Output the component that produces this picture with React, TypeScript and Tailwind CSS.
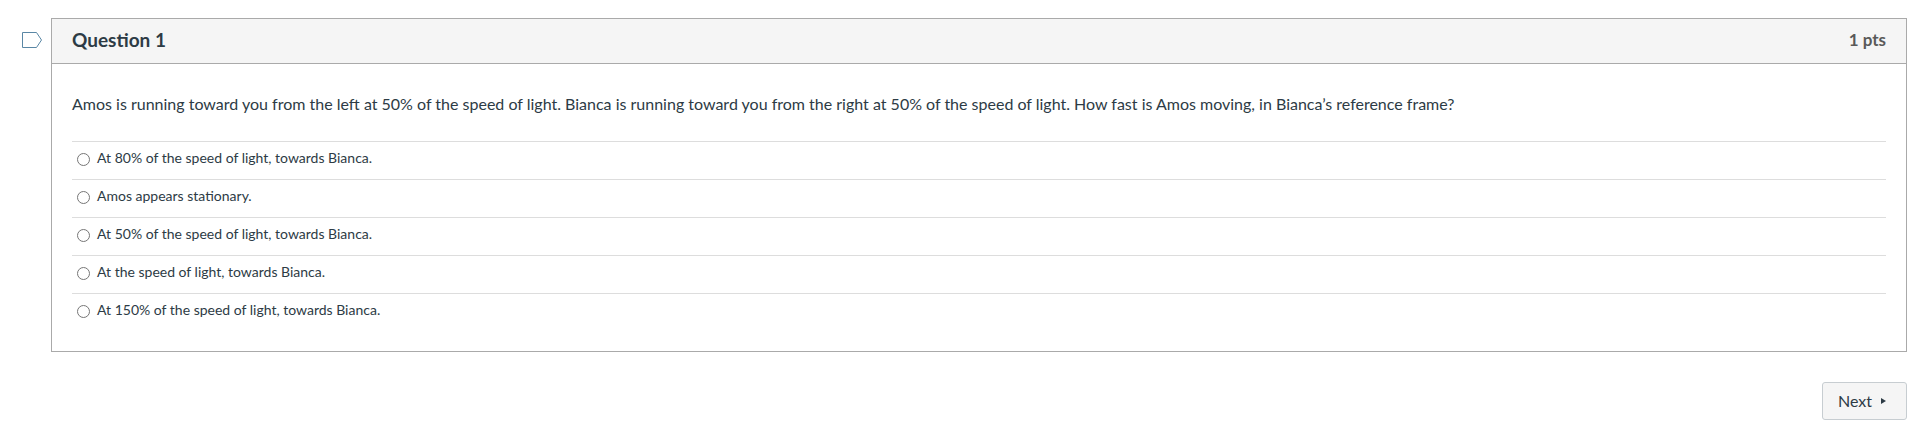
const answers = [
  'At 80% of the speed of light, towards Bianca.',
  'Amos appears stationary.',
  'At 50% of the speed of light, towards Bianca.',
  'At the speed of light, towards Bianca.',
  'At 150% of the speed of light, towards Bianca.',
]

export default function App() {
  return (
    <main className="min-h-screen bg-white px-5 pt-[18px] pb-2 font-['Lato',sans-serif] text-[#2d3b45]">
      <div className="flex items-start gap-[7px]">
        <button type="button" aria-label="Flag question" className="mt-3 h-5 w-6 shrink-0">
          <svg viewBox="0 0 24 20" className="h-5 w-6" fill="none" stroke="#5a87a5">
            <path d="M2.5 2.5h14l5 7.5l-5 7.5h-14z" />
          </svg>
        </button>

        <section className="min-w-0 flex-1 border border-[#aaaaaa]">
          <header className="flex items-center justify-between border-b border-[#aaaaaa] bg-[#f5f5f5] px-5 pt-[7px] pb-[9px] leading-7">
            <h2 className="text-[19px] font-bold">Question 1</h2>
            <span className="text-[17px] font-bold text-[#595959]">1 pts</span>
          </header>

          <form className="px-5 pt-7 pb-5">
            <fieldset>
              <legend className="mb-[25px] text-[16px] leading-6">
                Amos is running toward you from the left at 50% of the speed of light. Bianca is running toward you from
                the right at 50% of the speed of light. How fast is Amos moving, in Bianca’s reference frame?
              </legend>
              {answers.map((answer) => (
                <div key={answer} className="border-t border-[#dddddd] px-[5px] pt-[6px] pb-[11px]">
                  <label className="flex items-center gap-[7px] text-[14px] leading-5">
                    <input type="radio" name="answer" className="mt-[2px] size-[13px]" />
                    {answer}
                  </label>
                </div>
              ))}
            </fieldset>
          </form>
        </section>
      </div>

      <div className="mt-[30px] flex justify-end">
        <button
          type="button"
          className="flex items-center gap-[9px] rounded-[3px] border border-[#c7cdd1] bg-[#f5f5f5] py-[6px] pr-5 pl-[15px] text-[16px] leading-6"
        >
          Next
          <svg viewBox="0 0 5 6" className="h-[6px] w-[5px]" fill="currentColor">
            <path d="M0 0l5 3l-5 3z" />
          </svg>
        </button>
      </div>
    </main>
  )
}
